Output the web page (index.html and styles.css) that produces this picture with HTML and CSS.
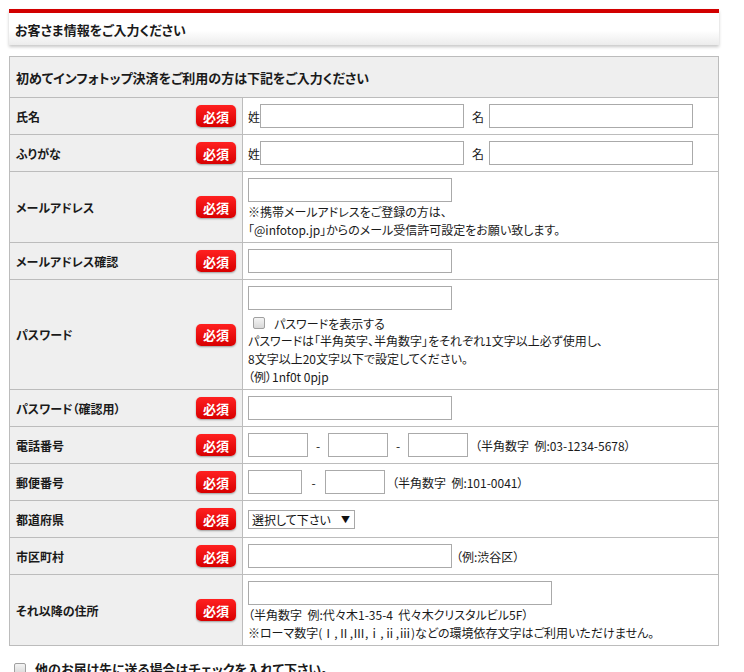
FILE: index.html
```html
<!DOCTYPE html>
<html lang="ja">
<head>
<meta charset="utf-8">
<title>お客さま情報をご入力ください</title>
<link rel="stylesheet" href="styles.css">
</head>
<body>
<div class="page">
  <h2 class="section-head">お客さま情報をご入力ください</h2>
  <table class="form-table">
    <tr>
      <th colspan="2" class="caption">初めてインフォトップ決済をご利用の方は下記をご入力ください</th>
    </tr>
    <tr>
      <th class="label"><div class="label-wrap"><span>氏名</span><span class="badge">必須</span></div></th>
      <td><span class="pre">姓</span><input class="text w204" type="text"><span class="pre mid">名</span><input class="text w204" type="text"></td>
    </tr>
    <tr>
      <th class="label"><div class="label-wrap"><span>ふりがな</span><span class="badge">必須</span></div></th>
      <td><span class="pre">姓</span><input class="text w204" type="text"><span class="pre mid">名</span><input class="text w204" type="text"></td>
    </tr>
    <tr>
      <th class="label"><div class="label-wrap"><span>メールアドレス</span><span class="badge">必須</span></div></th>
      <td class="multi">
        <input class="text w204 block" type="text">
        <p class="note">※携帯メールアドレスをご登録の方は、<br>「@infotop.jp」からのメール受信許可設定をお願い致します。</p>
      </td>
    </tr>
    <tr>
      <th class="label"><div class="label-wrap"><span>メールアドレス確認</span><span class="badge">必須</span></div></th>
      <td><input class="text w204" type="text"></td>
    </tr>
    <tr>
      <th class="label"><div class="label-wrap"><span>パスワード</span><span class="badge">必須</span></div></th>
      <td class="multi">
        <input class="text w204 block" type="password">
        <label class="check-line"><input class="check" type="checkbox"><span>パスワードを表示する</span></label>
        <p class="note tight">パスワードは「半角英字、半角数字」をそれぞれ1文字以上必ず使用し、<br>8文字以上20文字以下で設定してください。<br>（例）1nf0t 0pjp</p>
      </td>
    </tr>
    <tr>
      <th class="label"><div class="label-wrap"><span>パスワード（確認用）</span><span class="badge">必須</span></div></th>
      <td><input class="text w204" type="password"></td>
    </tr>
    <tr>
      <th class="label"><div class="label-wrap"><span>電話番号</span><span class="badge">必須</span></div></th>
      <td><input class="text w60" type="text"><span class="dash">-</span><input class="text w60" type="text"><span class="dash">-</span><input class="text w60" type="text"><span class="hint">（半角数字&nbsp;&nbsp;例:03-1234-5678）</span></td>
    </tr>
    <tr>
      <th class="label"><div class="label-wrap"><span>郵便番号</span><span class="badge">必須</span></div></th>
      <td><input class="text w54" type="text"><span class="dash wide">-</span><input class="text w60" type="text"><span class="hint">（半角数字&nbsp;&nbsp;例:101-0041）</span></td>
    </tr>
    <tr>
      <th class="label"><div class="label-wrap"><span>都道府県</span><span class="badge">必須</span></div></th>
      <td><span class="select-wrap"><select class="select"><option>選択して下さい</option></select></span></td>
    </tr>
    <tr>
      <th class="label"><div class="label-wrap"><span>市区町村</span><span class="badge">必須</span></div></th>
      <td><input class="text w204" type="text"><span class="hint near">（例:渋谷区）</span></td>
    </tr>
    <tr>
      <th class="label"><div class="label-wrap"><span>それ以降の住所</span><span class="badge">必須</span></div></th>
      <td class="multi">
        <input class="text w304 block" type="text">
        <p class="note">（半角数字&nbsp;&nbsp;例:代々木1-35-4&nbsp;&nbsp;代々木クリスタルビル5F）<br>※ローマ数字(Ⅰ,Ⅱ,Ⅲ,ⅰ,ⅱ,ⅲ)などの環境依存文字はご利用いただけません。</p>
      </td>
    </tr>
  </table>
  <label class="other-dest"><input class="check" type="checkbox"><span>他のお届け先に送る場合はチェックを入れて下さい。</span></label>
</div>
</body>
</html>
```
FILE: styles.css
```css
* { box-sizing: border-box; }
body {
  margin: 0;
  background: #fff;
  color: #1a1a1a;
  font-family: "Noto Sans CJK JP", "Liberation Sans", sans-serif;
  font-size: 12px;
  font-feature-settings: "palt";
}
.page {
  padding: 9px 0 0 9px;
  width: 719px;
}
.section-head {
  margin: 0;
  height: 36px;
  border-top: 4px solid #d20000;
  background: linear-gradient(#fff 55%, #ececec);
  box-shadow: 0 2px 3px rgba(0, 0, 0, 0.22);
  display: flex;
  align-items: center;
  padding-left: 6px;
  font-size: 13px;
  font-weight: bold;
}
.form-table {
  margin-top: 11px;
  width: 710px;
  border-collapse: collapse;
  border: 1px solid #bcbcbc;
}
.form-table th,
.form-table td {
  border: 1px solid #bcbcbc;
}
.caption {
  background: #efefef;
  height: 41px;
  text-align: left;
  padding: 0 6px;
  font-size: 13px;
  font-weight: bold;
}
.label {
  width: 233px;
  background: #efefef;
  padding: 0 6px 0 6px;
  font-size: 12px;
  font-weight: bold;
  text-align: left;
}
.label-wrap {
  display: flex;
  justify-content: space-between;
  align-items: center;
}
.badge {
  display: inline-flex;
  align-items: center;
  justify-content: center;
  width: 40px;
  height: 22px;
  border-radius: 5px;
  background: linear-gradient(#ff2020, #d80000);
  color: #fff;
  font-weight: bold;
  font-size: 13px;
  box-shadow: 0 1px 2px rgba(0, 0, 0, 0.35);
}
.form-table td {
  padding: 6px 5px;
  height: 37px;
  vertical-align: middle;
  white-space: nowrap;
}
.form-table td.multi {
  padding-bottom: 3px;
}
.text {
  height: 24px;
  border: 1px solid #aaa;
  padding: 0 3px;
  font: inherit;
  vertical-align: middle;
  margin: 0;
  background: #fff;
}
.block { display: block; }
.w204 { width: 204px; }
.w304 { width: 304px; }
.w60 { width: 60px; }
.w54 { width: 54px; }
.pre { vertical-align: middle; }
.pre.mid { margin: 0 5px 0 8px; }
.dash {
  display: inline-block;
  width: 20px;
  text-align: center;
  vertical-align: middle;
}
.dash.wide { width: 23px; }
.hint {
  margin-left: 7px;
  vertical-align: middle;
}
.hint.near { margin-left: 4px; }
.note {
  margin: 1px 0 0;
  line-height: 18px;
}
.note.tight { margin-top: 0; }
.check-line {
  display: flex;
  align-items: center;
  height: 18px;
  margin-top: 4px;
  padding-left: 5px;
}
.check {
  appearance: none;
  -webkit-appearance: none;
  width: 12px;
  height: 12px;
  margin: 0 9px 0 0;
  border: 1px solid #a0a0a0;
  border-radius: 2px;
  background: linear-gradient(#f4f4f4, #d8d8d8);
}
.select-wrap {
  position: relative;
  display: inline-block;
  vertical-align: middle;
}
.select-wrap::after {
  content: "▼";
  position: absolute;
  right: 5px;
  top: 3px;
  font-size: 9px;
  color: #111;
  pointer-events: none;
}
.select {
  appearance: none;
  -webkit-appearance: none;
  width: 107px;
  height: 19px;
  border: 1px solid #a8a8a8;
  background: #fff;
  font: inherit;
  font-size: 12px;
  padding: 0 0 0 3px;
  line-height: 17px;
  color: #111;
}
.other-dest {
  display: flex;
  align-items: center;
  margin: 13px 0 0 5px;
  font-size: 13px;
  font-weight: bold;
}
```
